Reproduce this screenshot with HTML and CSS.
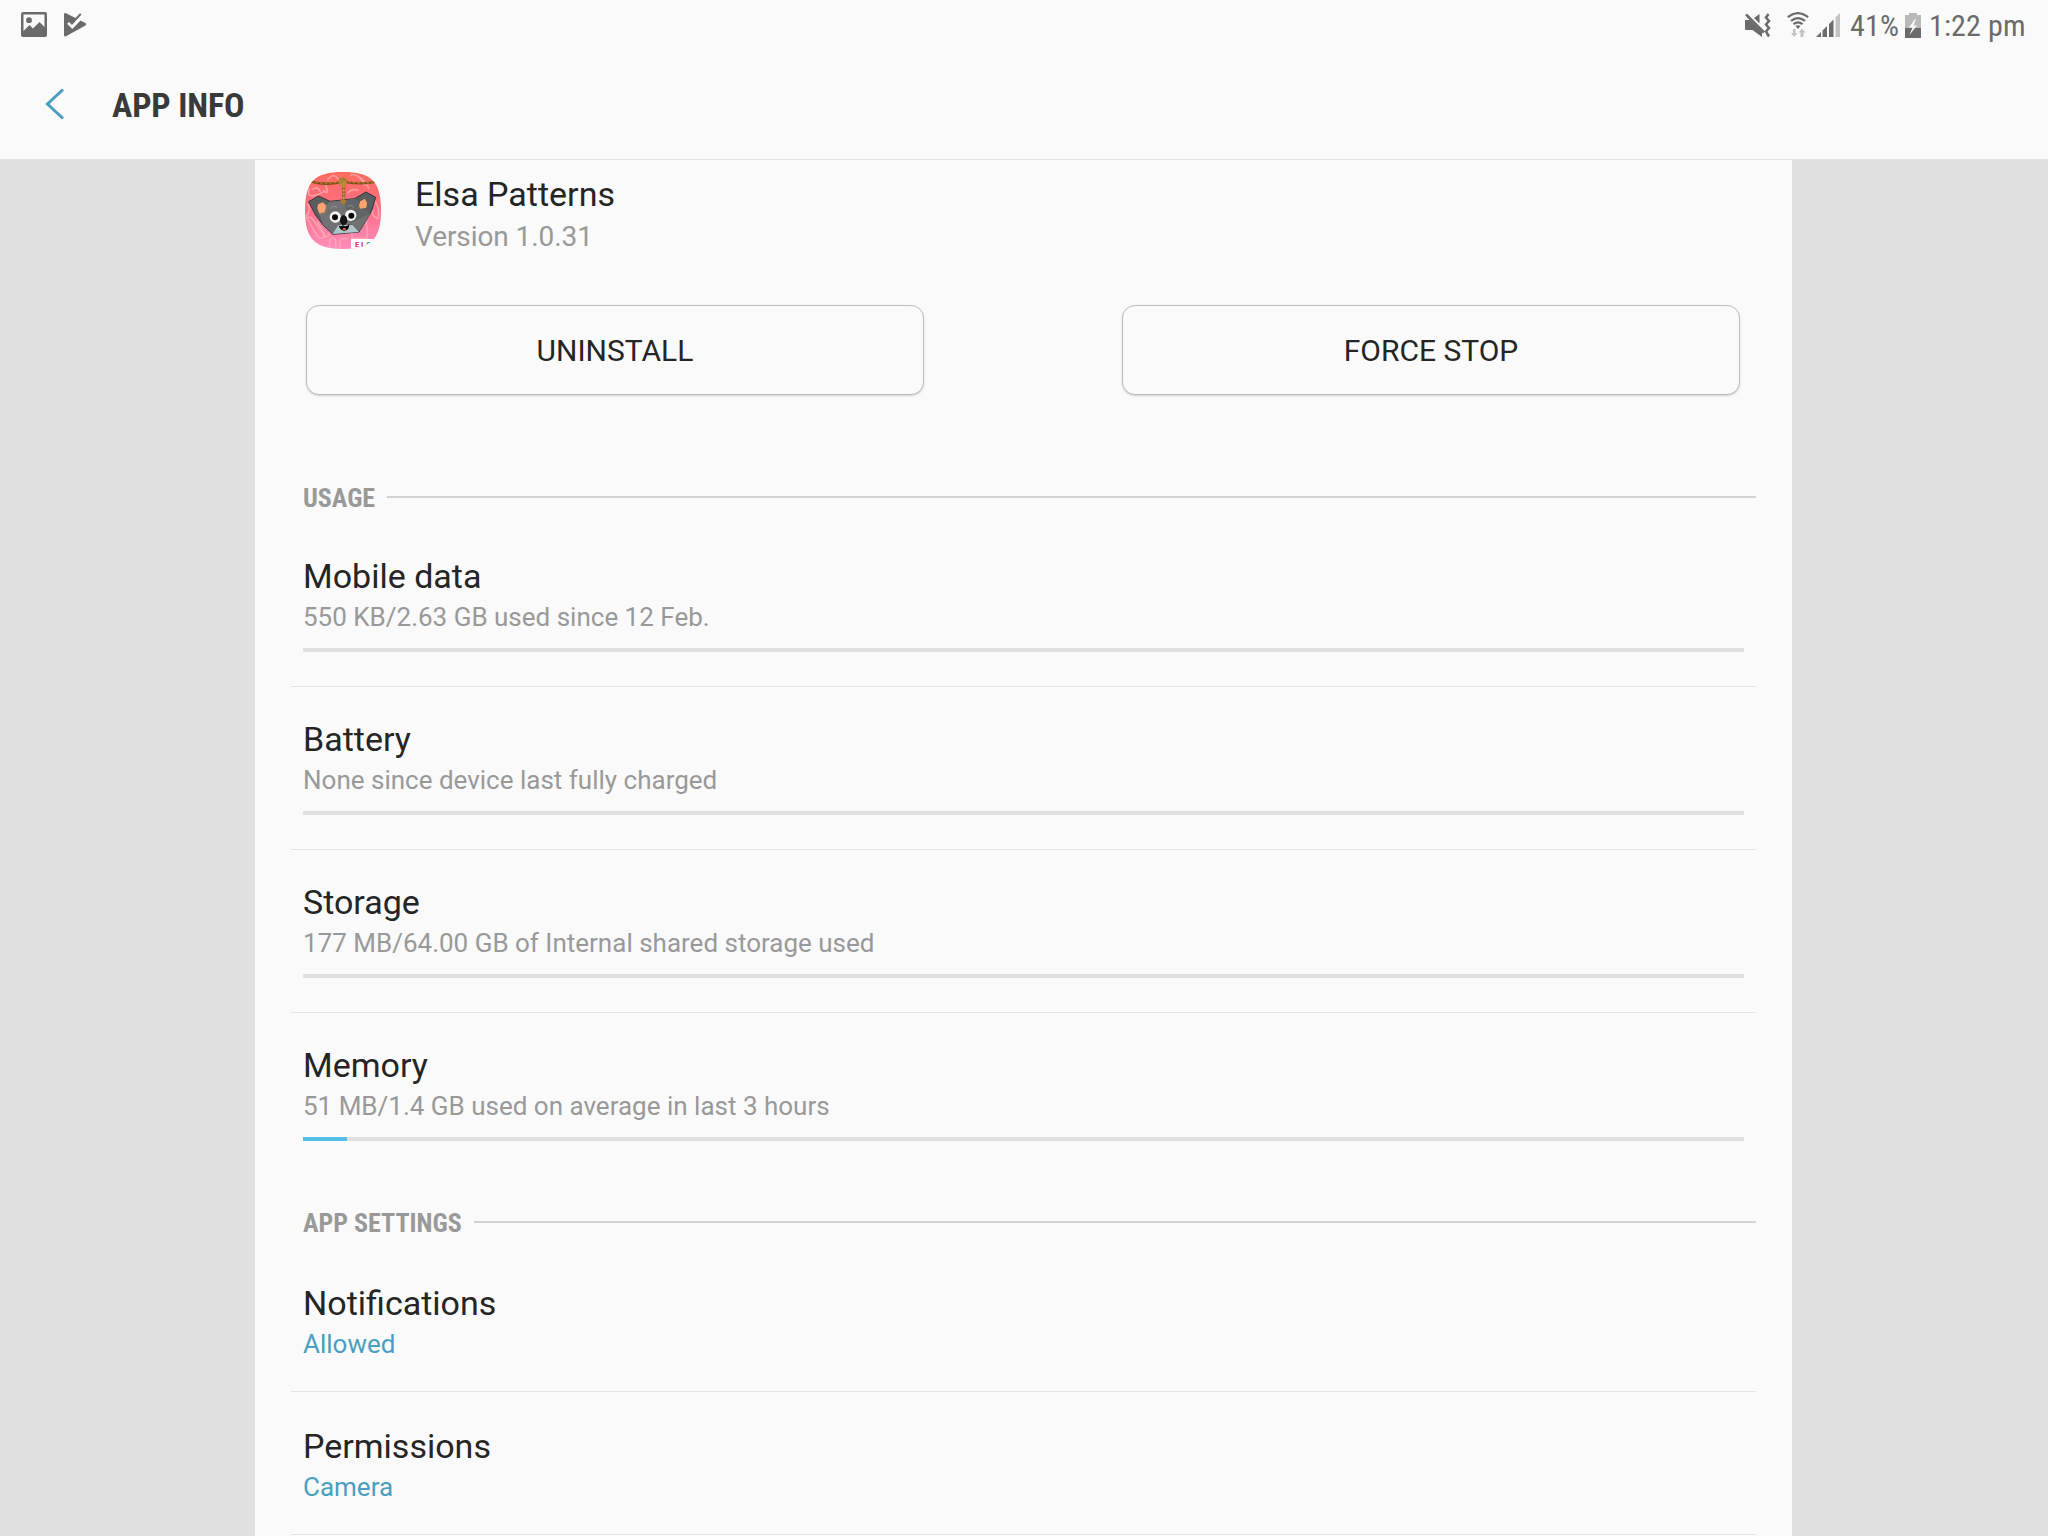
FILE: index.html
```html
<!DOCTYPE html>
<html lang="en">
<head>
<meta charset="utf-8">
<title>App info</title>
<link rel="stylesheet" href="styles.css">
</head>
<body>
<header class="top">
  <div class="status">
    <div class="status-left">
      <svg class="ic-picture" width="26" height="25" viewBox="0 0 26 25"><path fill="#6b6b6b" fill-rule="evenodd" d="M2 0H24Q26 0 26 2V23Q26 25 24 25H2Q0 25 0 23V2Q0 0 2 0ZM2.500 2.500V19L8.500 13L12 16.500L18.500 10L23.500 15V2.500ZM8 5.300A2.900 2.900 0 1 1 8 11.100A2.900 2.900 0 0 1 8 5.300Z"/></svg>
      <svg class="ic-play" width="24" height="25" viewBox="0 0 24 25"><path fill="#6b6b6b" d="M2.500 1L12.500 6L17 1.200L18.500 2.500L9 13L6 10L4.200 11.800L9.300 17L17.500 8.500L22.500 11Q24 12.200 22.500 13.500L3 24.200Q1 25 1 23V2.500Q1 .5 2.500 1Z"/></svg>
    </div>
    <div class="status-right">
      <svg class="ic-mute" width="27" height="26" viewBox="0 0 27 26"><g fill="#6b6b6b"><path d="M1 7H6L18 19V24L8.500 17H2Q1 17 1 16Z"/><path d="M10 5L15.500 1V10.500Z"/></g><path d="M2 1.500L20 19.500M24.500 1L22 4.500L25 8L22 11.500L25 15L22 18.500L25 23.500" fill="none" stroke="#6b6b6b" stroke-width="2.500"/></svg>
      <svg class="ic-wifi" width="22" height="26" viewBox="0 0 22 26"><g fill="none" stroke="#6b6b6b" stroke-width="2.200"><path d="M.8 5.200Q11-3 21.200 5.200"/><path d="M4 8.900Q11 3.200 18 8.900"/><path d="M6.500 12.200Q11 8.600 15.500 12.200"/></g><path fill="#6b6b6b" d="M8.500 14Q11 12.500 13.500 14L11 17Z"/><path fill="#c2c2c2" d="M6 17H8.500V21H10.500L7.200 25L4 21H6ZM13.500 25H16.500V20.500H18.500L15 16.500L11.500 20.500H13.500Z"/></svg>
      <svg class="ic-signal" width="25" height="24" viewBox="0 0 25 24"><path fill="#6b6b6b" d="M0 24L5 19V24ZM6.500 24V17.500L11 13V24ZM13 24V11L17.500 6.500V24Z"/><path fill="#c2c2c2" d="M19.500 24V4.500L24 0V24Z"/></svg>
      <span class="cond pct">41%</span>
      <svg class="ic-battery" width="16" height="25" viewBox="0 0 16 25"><path fill="#b9b9b9" d="M4 0H12V2H16V15H0V2H4Z"/><path fill="#6b6b6b" d="M0 15H16V25H0Z"/><path fill="#fafafa" d="M10 6L4 14.500H7.500L4.500 22L12 12.500H8.500L11 6Z"/></svg>
      <span class="cond time">1:22 pm</span>
    </div>
  </div>
  <div class="bar">
    <svg class="ic-back" width="20" height="32" viewBox="0 0 20 32"><path d="M18 1.500L2.500 16L18 30.500" fill="none" stroke="#4a9fc0" stroke-width="3"/></svg>
    <h1 class="cond title">APP INFO</h1>
  </div>
</header>
<main class="panel">
  <section class="app">
    <svg class="app-icon" width="76" height="77" viewBox="45 51 228 231">
      <defs>
        <linearGradient id="pink" x1="0" y1="0" x2="0" y2="1"><stop offset="0" stop-color="#ff6b5c"/><stop offset=".5" stop-color="#fb718a"/><stop offset="1" stop-color="#ff8dbd"/></linearGradient>
        <clipPath id="tile"><path d="M159 51C244 51 273 80 273 166C273 252 244 282 159 282C74 282 45 252 45 166C45 80 74 51 159 51Z"/></clipPath>
      </defs>
      <g clip-path="url(#tile)">
        <rect x="45" y="51" width="228" height="231" fill="url(#pink)"/>
        <g fill="none" stroke="#ffadb5" stroke-width="5" opacity=".75">
          <path d="M58 100Q50 125 70 122T102 108Q120 122 106 88M65 104Q83 92 91 110M112 76Q130 50 145 73M180 62Q205 50 224 92M194 60Q218 65 237 101"/>
          <path d="M53 146Q65 163 49 185L80 240Q96 260 104 239L81 198M49 193Q58 179 69 194L107 246Q121 244 114 234M119 280V257Q127 240 137 256V282M151 278Q141 246 175 251M184 222L225 186L232 219V251H187ZM205 106Q183 99 173 116M248 132Q275 161 263 191Q239 180 250 165"/>
        </g>
        <path d="M62 79Q104 92 151 82H171Q218 89 260 80" fill="none" stroke="#775018" stroke-width="7"/>
        <path d="M62 78Q104 90 151 80H171Q218 88 260 79" fill="none" stroke="#b27b34" stroke-width="4" stroke-dasharray="9 5"/>
        <path fill="#5b5e60" stroke="#343637" stroke-width="3" stroke-linejoin="round" d="M56 140L86 123L120 139L194 131L228 111L257 127L244 170L207 231L129 238L101 212L77 181Z"/>
        <path fill="#707273" d="M97 158L120 140L194 132L240 178L207 229L190 205L129 236L100 210L89 180Z"/>
        <path fill="#626567" d="M160 137L194 132L240 178L208 228L183 202Z"/>
        <path fill="#ffa36e" d="M84 148L99 142L109 153L104 172L88 176L82 160ZM211 139L225 131L231 144L229 158L210 161L207 151Z"/>
        <path fill="#afc5ca" d="M128 237L145 210H188L207 231Z"/>
        <path fill="#707273" d="M182 203L238 178L206 229Z"/>
        <g fill="none" stroke="#a1a3a5" stroke-width="2"><path d="M122 161Q130 149 142 157M173 154Q182 146 191 157"/></g>
        <circle cx="136" cy="186" r="17" fill="#f7f7f4"/><circle cx="182" cy="181" r="17" fill="#f7f7f4"/>
        <circle cx="135" cy="187" r="9" fill="#090909"/><circle cx="184" cy="182" r="9" fill="#090909"/>
        <path d="M161 88V139" stroke="#855d23" stroke-width="9"/><path d="M161 91V143" stroke="#c99647" stroke-width="6" stroke-dasharray="8 3"/>
        <ellipse cx="158" cy="80" rx="13" ry="14" fill="#bc8a3d"/><path d="M148 76Q160 63 170 80M148 86L166 72" fill="none" stroke="#8f6425" stroke-width="2"/>
        <ellipse cx="160" cy="140" rx="8" ry="7" fill="#ae7b2f"/>
        <ellipse cx="161" cy="196" rx="11" ry="15" fill="#151515"/>
        <path fill="#070707" d="M146 210Q151 217 159 211Q169 218 178 207Q178 228 161 227Q148 224 146 210Z"/>
        <ellipse cx="163" cy="222" rx="6" ry="3" fill="#ed5646"/>
        <path d="M183 252H273V282H183Z" fill="#fff"/>
        <text class="logo" y="276"><tspan x="195" fill="#d9344c">E</tspan><tspan x="213" fill="#a62b9b">L</tspan><tspan x="229" fill="#23a6c8">S</tspan></text>
      </g>
    </svg>
    <div class="app-text">
      <div class="name">Elsa Patterns</div>
      <div class="version">Version 1.0.31</div>
    </div>
  </section>
  <div class="buttons">
    <button class="btn">UNINSTALL</button>
    <button class="btn">FORCE STOP</button>
  </div>

  <h2 class="section usage"><span class="cond">USAGE</span></h2>
  <div class="row">
    <div class="row-title">Mobile data</div>
    <div class="row-sub">550 KB/2.63 GB used since 12 Feb.</div>
    <div class="meter"></div>
  </div>
  <div class="row">
    <div class="row-title">Battery</div>
    <div class="row-sub">None since device last fully charged</div>
    <div class="meter"></div>
  </div>
  <div class="row">
    <div class="row-title">Storage</div>
    <div class="row-sub">177 MB/64.00 GB of Internal shared storage used</div>
    <div class="meter"></div>
  </div>
  <div class="row last">
    <div class="row-title">Memory</div>
    <div class="row-sub">51 MB/1.4 GB used on average in last 3 hours</div>
    <div class="meter"><div class="fill" style="width:44px"></div></div>
  </div>

  <h2 class="section settings"><span class="cond">APP SETTINGS</span></h2>
  <div class="row plain">
    <div class="row-title">Notifications</div>
    <div class="row-sub link">Allowed</div>
  </div>
  <div class="row plain">
    <div class="row-title">Permissions</div>
    <div class="row-sub link">Camera</div>
  </div>
</main>
</body>
</html>
```
FILE: styles.css
```css
* { box-sizing: border-box; }
html, body { margin: 0; height: 1536px; overflow: hidden; }
body { background: #e1e1e1; color: #252525; font-family: Roboto, "Liberation Sans", sans-serif; }
svg { display: block; flex: none; }
.cond { font-family: "Roboto Condensed", Roboto, sans-serif; font-stretch: 75%; white-space: nowrap; }

.top { height: 160px; background: #fafafa; border-bottom: 1px solid #e1e1e1; }
.status { height: 52px; display: flex; justify-content: space-between; color: #6b6b6b; font-size: 30px; line-height: 36px; }
.status-left, .status-right { display: flex; align-items: flex-start; }
.ic-picture { margin: 12px 0 0 21px; }
.ic-play { margin: 12px 0 0 16px; }
.status-right { padding-right: 23px; }
.ic-mute { margin: 13px 16px 0 0; }
.ic-wifi { margin: 12px 7px 0 0; }
.ic-signal { margin: 13px 9px 0 0; }
.pct { width: 48px; margin: 8px 7px 0 0; letter-spacing: .2px; }
.ic-battery { margin: 13px 8px 0 0; }
.time { width: 96px; margin-top: 8px; letter-spacing: .15px; }
.bar { height: 107px; display: flex; align-items: flex-start; }
.ic-back { margin: 36px 0 0 45px; }
.title { margin: 33px 0 0 47px; font-size: 34px; line-height: 40px; font-weight: 700; letter-spacing: -.15px; color: #3a3a3a; }

.panel { width: 1537px; height: 1376px; margin-left: 255px; padding: 12px 36px 0; background: #fafafa; overflow: hidden; }
.app { display: flex; padding-left: 14px; height: 133px; }
.app-text { margin-left: 34px; padding-top: 2px; }
.logo { font: 700 23px Roboto, sans-serif; }
.name { font-size: 34px; line-height: 40px; }
.version { margin-top: 6px; font-size: 28px; line-height: 33px; letter-spacing: -.08px; color: #999; }
.buttons { display: flex; justify-content: space-between; padding: 0 16px 0 15px; }
.btn { width: 618px; height: 90px; padding: 2px 0 0; border: 1px solid #bdbdbd; border-radius: 13px; background: #fafafa; box-shadow: 0 1px 2px rgba(0,0,0,.16); color: #252525; font: 400 30px/36px Roboto, sans-serif; }

.section { display: flex; align-items: flex-start; height: 30px; margin: 0 0 11px; padding-left: 12px; font-size: 26px; line-height: 30px; font-weight: 700; color: #999; }
.section::after { content: ""; flex: 1; height: 2px; margin: 13px 0 0 12px; background: #d3d3d3; }
.usage { margin-top: 88px; }
.settings { margin-top: 33px; }

.row { height: 163px; padding: 32px 12px 0; border-bottom: 1px solid #e4e4e4; }
.row.last { height: 162px; border-bottom: 0; }
.row.plain { height: 143px; padding-top: 34px; }
.row-title { font-size: 34px; line-height: 40px; }
.row-sub { margin-top: 6px; font-size: 26px; line-height: 30px; color: #999; }
.row-sub.link { color: #4a9fc0; }
.meter { height: 4px; margin-top: 16px; background: #e1e0de; }
.fill { height: 4px; background: #54bfe6; }
```
